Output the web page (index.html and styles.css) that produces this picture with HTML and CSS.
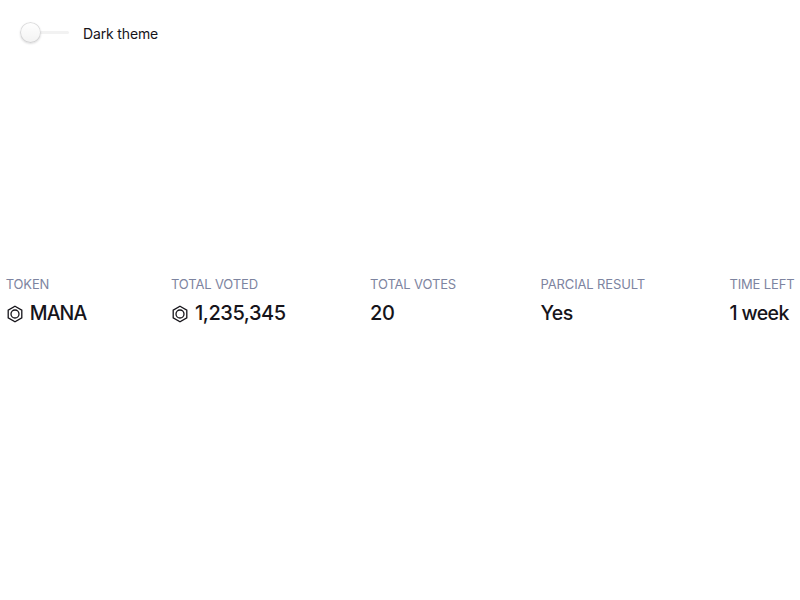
FILE: index.html
```html
<!DOCTYPE html>
<html lang="en">
<head>
<meta charset="utf-8">
<title>Voting stats</title>
<link rel="stylesheet" href="styles.css">
</head>
<body>
<label class="toggle"><span class="track"><span class="knob"></span></span><span class="toggle-text">Dark theme</span></label>
<main class="stats">
<div class="stat"><div class="label">Token</div><div class="value"><svg class="mana" viewBox="0 0 18 18"><path d="M9 1.2 15.8 5.1V12.9L9 16.8 2.2 12.9V5.1Z"/><circle cx="9" cy="9" r="4"/></svg><span class="symbol">MANA</span></div></div>
<div class="stat"><div class="label">Total voted</div><div class="value"><svg class="mana" viewBox="0 0 18 18"><path d="M9 1.2 15.8 5.1V12.9L9 16.8 2.2 12.9V5.1Z"/><circle cx="9" cy="9" r="4"/></svg>1,235,345</div></div>
<div class="stat"><div class="label">Total votes</div><div class="value">20</div></div>
<div class="stat"><div class="label">Parcial result</div><div class="value word">Yes</div></div>
<div class="stat"><div class="label">Time left</div><div class="value word">1 week</div></div>
</main>
</body>
</html>
```
FILE: styles.css
```css
* { box-sizing: border-box; }
body { margin: 0; height: 600px; display: flex; flex-direction: column; background: #fff; color: #16141a; font-family: Inter, sans-serif; overflow: hidden; }
.toggle { display: flex; align-items: center; margin: 22px 0 0 20px; height: 21px; font-size: 14px; letter-spacing: -.15px; }
.track { display: flex; align-items: center; width: 49px; height: 3px; border-radius: 2px; background: #f2f2f2; }
.knob { flex: none; width: 21px; height: 21px; border-radius: 50%; background: #fff linear-gradient(transparent, rgba(0,0,0,.05)); box-shadow: 0 1px 2px rgba(34,36,38,.15), 0 0 0 1px rgba(34,36,38,.15) inset; }
.toggle-text { margin: 2px 0 0 14px; }
.stats { display: flex; justify-content: space-between; margin: 232px 5.5px 0 5.7px; }
.label { font-size: 13px; line-height: 18px; letter-spacing: -.14px; color: #7d84a0; text-transform: uppercase; }
.value { display: flex; align-items: center; margin-top: 7px; font-size: 20px; line-height: 26px; font-weight: 500; letter-spacing: -.45px; }
.symbol { font-size: 19.5px; letter-spacing: -.85px; }
.word { font-size: 19.5px; letter-spacing: -.6px; }
.mana { position: relative; top: 1px; width: 18px; height: 18px; margin-right: 6px; fill: none; stroke: currentColor; stroke-width: 1.3; }
```
